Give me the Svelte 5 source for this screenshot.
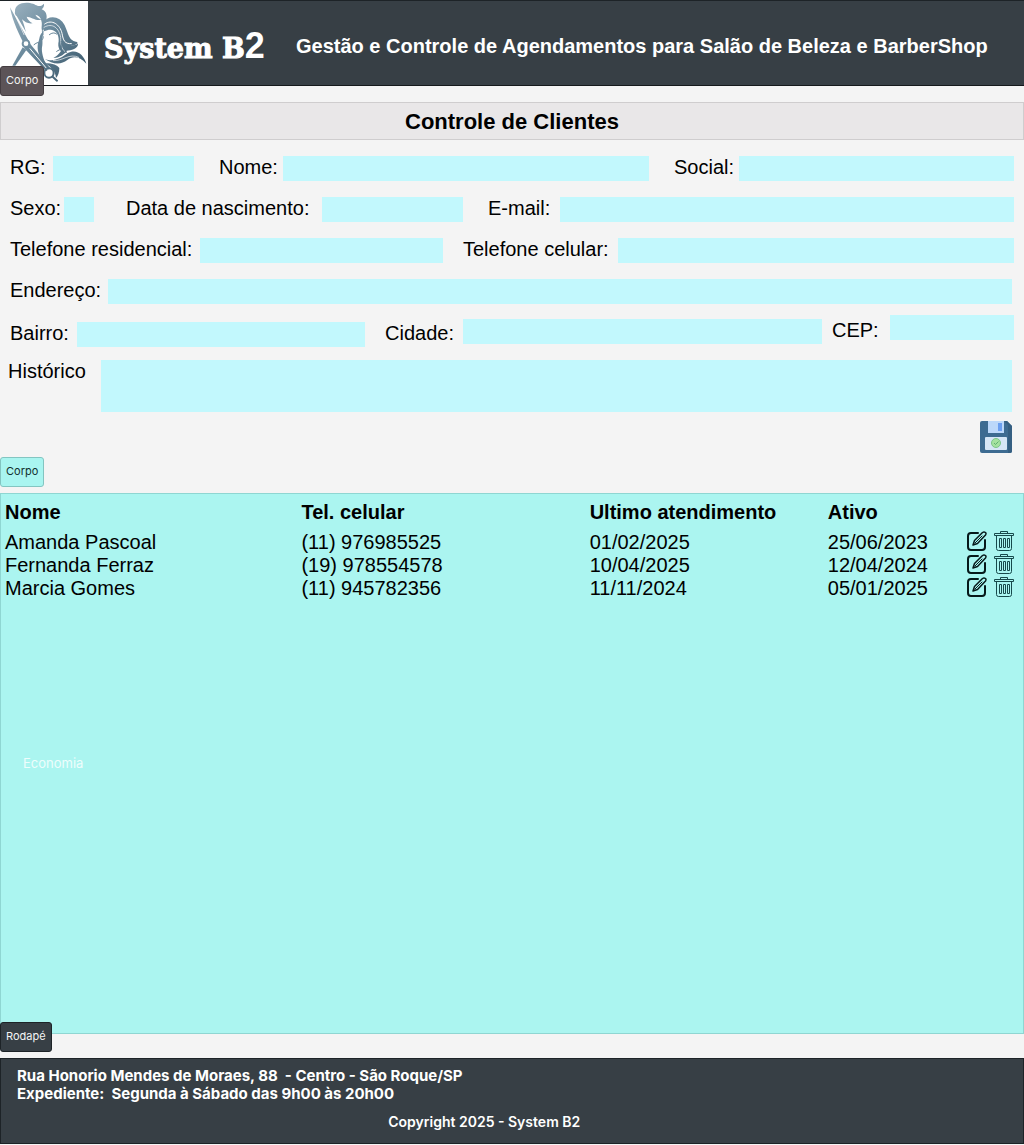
<script>
  const rows = [
    { name: 'Amanda Pascoal', phone: '(11) 976985525', last: '01/02/2025', active: '25/06/2023' },
    { name: 'Fernanda Ferraz', phone: '(19) 978554578', last: '10/04/2025', active: '12/04/2024' },
    { name: 'Marcia Gomes', phone: '(11) 945782356', last: '11/11/2024', active: '05/01/2025' }
  ];
</script>

<div class="page">
  <header class="top">
    <svg class="logo" viewBox="0 3 264 252" role="img" aria-label="Barbearia e salão">
      <defs>
        <linearGradient id="steel" gradientUnits="userSpaceOnUse" x1="40" y1="10" x2="230" y2="220">
          <stop offset="0" stop-color="#9ab1bf" />
          <stop offset="0.5" stop-color="#68879a" />
          <stop offset="1" stop-color="#3f5d70" />
        </linearGradient>
      </defs>
      <rect y="3" width="264" height="252" fill="#fff" />
      <g fill="url(#steel)">
        <path d="M45 34C44 14 66 5 90 9C106 12 112 20 120 18C126 17 130 13 132 11C133 18 130 24 125 28C142 34 143 54 136 68C134 78 132 88 127 92C122 84 128 74 124 62C122 52 116 46 106 44C112 54 120 58 127 58C112 66 92 50 80 50C82 58 90 66 98 70C84 72 74 66 66 58C72 72 74 84 78 96L50 48C44 46 44 40 45 34Z" />
        <path d="M30 22L88 126L76 140C58 104 38 66 30 22Z" />
        <path d="M86 126L150 204L138 214L72 144Z" />
        <path d="M68 142L79 150L46 197L37 197Z" />
        <path d="M128 68C144 44 180 46 194 76C206 102 206 122 228 125C238 126 230 136 214 137C198 142 196 150 202 158C178 160 172 142 176 124C178 98 160 80 132 94C128 84 128 76 128 68Z" />
        <path d="M192 140C208 132 224 142 234 130C236 147 212 152 200 152C194 162 182 172 160 174C178 164 184 150 192 140Z" />
        <path d="M134 176C160 188 184 174 202 160C228 144 252 164 259 191C238 168 218 168 202 180C182 196 156 192 134 176Z" />
        <path d="M136 190C158 190 172 196 178 204C178 218 174 228 168 234C166 214 156 204 136 190Z" />
        <path d="M114 130C110 150 116 172 138 192C130 178 124 156 126 142C130 126 124 112 132 92C116 104 120 116 114 130Z" />
      </g>
      <g fill="none" stroke="#fff" stroke-linecap="round" stroke-width="3">
        <path d="M134 72C156 56 180 74 186 100C190 122 194 132 214 131" />
        <path d="M132 82C158 66 178 86 182 112C182 132 184 146 194 154" stroke-width="2" />
        <path d="M160 182C188 184 208 158 236 172M42 38L72 104" stroke-width="2" />
        <path d="M90 146L142 208" stroke-width="3" />
      </g>
      <g fill="none" stroke="url(#steel)" stroke-linecap="round" stroke-width="3">
        <circle cx="78" cy="131" r="10" fill="#fff" stroke-width="6" />
        <circle cx="147" cy="219" r="14" stroke-width="6" />
        <path d="M158 230L171 242" stroke-width="6" />
        <path d="M127 92C126 98 132 102 128 106C132 112 128 118 124 122C120 128 110 126 102 134" />
        <path d="M148 104Q160 94 170 102M184 124C188 130 182 136 184 142C184 150 174 150 170 154" />
      </g>
    </svg>
    <span class="brand">System B<span class="two">2</span></span>
    <span class="tagline">Gestão e Controle de Agendamentos para Salão de Beleza e BarberShop</span>
    <span class="tag over">Corpo</span>
  </header>

  <h1>Controle de Clientes</h1>

  <form>
    <div class="row r1">
      <label for="rg">RG:</label><input id="rg" />
      <label class="next" for="nome">Nome:</label><input id="nome" />
      <label class="next" for="social">Social:</label><input id="social" />
    </div>
    <div class="row r2">
      <label for="sexo">Sexo:</label><input id="sexo" />
      <label class="next wide" for="nasc">Data de nascimento:</label><input id="nasc" />
      <label class="next" for="email">E-mail:</label><input id="email" type="email" />
    </div>
    <div class="row r3">
      <label for="res">Telefone residencial:</label><input id="res" type="tel" />
      <label class="next near" for="cel">Telefone celular:</label><input id="cel" type="tel" />
    </div>
    <div class="row r4">
      <label for="end">Endereço:</label><input id="end" />
    </div>
    <div class="row r5">
      <label class="low" for="bairro">Bairro:</label><input class="low" id="bairro" />
      <label class="next near low" for="cidade">Cidade:</label><input id="cidade" />
      <label class="next tight" for="cep">CEP:</label><input class="high" id="cep" />
    </div>
    <div class="row r6">
      <label for="hist">Histórico</label><textarea id="hist"></textarea>
    </div>
    <button class="save" type="button" aria-label="Salvar">
      <svg width="32" height="32" viewBox="0 0 32 32">
        <path d="M2 0H27L32 5V30Q32 32 30 32H2Q0 32 0 30V2Q0 0 2 0Z" fill="#3d6b91" />
        <path d="M27 0L32 5V30Q32 32 30 32H28V4L24 0Z" fill="#355f82" />
        <rect x="8" width="16" height="12" fill="#bcd8fa" />
        <rect x="18" y="2" width="4" height="8" fill="#6c9ff0" />
        <rect x="5" y="16" width="22" height="13" rx="1" fill="#d6e6f6" />
        <circle cx="16" cy="22" r="4.5" fill="#a5e2a0" stroke="#7cc58a" />
        <path d="M14 22L15.500 23.500L18.500 20.500" fill="none" stroke="#5fae72" />
      </svg>
    </button>
  </form>

  <span class="tag aqua">Corpo</span>

  <main>
    <table>
      <thead>
        <tr><th class="c1">Nome</th><th class="c2">Tel. celular</th><th class="c3">Ultimo atendimento</th><th class="c4">Ativo</th><th class="c5" aria-label="Ações"></th></tr>
      </thead>
      <tbody>
        {#each rows as r}
          <tr>
            <td>{r.name}</td><td>{r.phone}</td><td>{r.last}</td><td>{r.active}</td>
            <td>
              <div class="actions">
                <button type="button" aria-label="Editar {r.name}">
                  <svg width="20" height="20" viewBox="0 0 20 20" fill="none" stroke="#06191a" stroke-linejoin="round" stroke-linecap="round">
                    <path d="M11 2H4Q1 2 1 5V16Q1 19 4 19H15Q18 19 18 16V9" stroke-width="2" />
                    <path d="M6 14L7.500 9.500L15.500 1.500Q17 0.500 18.500 1.500Q19.500 2.500 18.500 4L10.500 12.500Z" stroke-width="1.500" />
                    <path d="M8 12L15 5" stroke-width="1" />
                  </svg>
                </button>
                <button type="button" aria-label="Excluir {r.name}">
                  <svg width="20" height="20" viewBox="0 0 20 20" fill="none" stroke="#17494b">
                    <path d="M0.500 2.500H19.500V4.500H0.500ZM6.500 2.500V0.500H13.500V2.500M2.500 4.500V17.500Q2.500 19.500 4.500 19.500H15.500Q17.500 19.500 17.500 17.500V4.500" />
                    <path d="M5.500 7.500H7.500V16.500H5.500ZM9.500 7.500H11.500V16.500H9.500ZM13.500 7.500H15.500V16.500H13.500Z" />
                  </svg>
                </button>
              </div>
            </td>
          </tr>
        {/each}
      </tbody>
    </table>
    <p class="ghost">Economia</p>
    <span class="tag foot">Rodapé</span>
  </main>

  <footer>
    <address>
      Rua Honorio Mendes de Moraes, 88&nbsp; - Centro - São Roque/SP<br />
      Expediente:&nbsp; Segunda à Sábado das 9h00 às 20h00
    </address>
    <p>Copyright 2025 - System B2</p>
  </footer>
</div>

<style>
  :global(body) { background: #f4f4f4; }
  * { box-sizing: border-box; }
  .page {
    min-height: 100vh;
    display: flex;
    flex-direction: column;
    padding-bottom: 1px;
    font-family: 'Liberation Sans', Arial, sans-serif;
    font-size: 20px;
    line-height: 23px;
    color: #000;
  }
  .top {
    position: relative;
    display: flex;
    align-items: center;
    height: 86px;
    background: #373f45;
    border-top: 1px solid #1d2327;
    border-bottom: 1px solid #15191c;
    color: #fff;
  }
  .logo { flex: none; width: 88px; height: 84px; }
  .brand {
    flex: none;
    width: 208px;
    padding: 8px 0 0 16px;
    font: bold 27px/40px 'DejaVu Serif', serif;
    white-space: nowrap;
    -webkit-text-stroke: 1px #fff;
  }
  .two { font: bold 36px/40px 'Liberation Sans', Arial, sans-serif; -webkit-text-stroke: 0; }
  .tagline { padding-top: 6px; font-weight: bold; white-space: nowrap; }
  .tag {
    display: flex;
    align-items: center;
    width: fit-content;
    height: 30px;
    padding: 0 5px 2px;
    border: 1px solid #443d41;
    border-radius: 3px;
    background: #5c5458;
    color: #f4f4f4;
    font: 11px/16px Inter, sans-serif;
  }
  .over { position: absolute; left: 0; top: 65px; }
  .aqua { margin: 4px 0 6px; background: #a9f5f0; border-color: #83c5c1; color: #12302f; }
  .foot { position: absolute; left: -1px; bottom: -19px; background: #373f45; border-color: #1d2327; }
  h1 {
    margin: 16px 0;
    padding: 7px 0 5px;
    border: 1px solid #cfcdce;
    background: #e9e7e8;
    text-align: center;
    font-size: 22px;
    line-height: 24px;
  }
  form { display: flex; flex-direction: column; gap: 16px; padding: 0 10px; }
  .row { display: grid; align-items: center; }
  .row label { padding-bottom: 2px; white-space: nowrap; }
  .row .next { padding-left: 25px; }
  .row .wide { padding-left: 32px; }
  .row .near { padding-left: 20px; }
  .row .tight { padding-left: 10px; }
  .low { align-self: end; }
  .high { align-self: start; }
  .r1 { grid-template-columns: 43px 141fr 89px 366fr 90px 275fr; }
  .r2 { grid-template-columns: 54px 30fr 228px 141fr 97px 454fr; }
  .r3 { grid-template-columns: 190px 243fr 175px 396fr; }
  .r4 { grid-template-columns: 98px 1fr; padding-right: 2px; }
  .r5 { grid-template-columns: 67px 288fr 98px 359fr 68px 124fr; min-height: 32px; margin: -5px 0 -3px; }
  .r6 { grid-template-columns: 93px 1fr; align-items: start; margin-left: -2px; padding-right: 2px; }
  input, textarea {
    display: block;
    width: 100%;
    min-width: 0;
    height: 25px;
    margin: 0;
    padding: 0 4px;
    border: 0;
    border-radius: 0;
    background: #c2f8fd;
    font: inherit;
    resize: none;
  }
  textarea { height: 52px; }
  button { display: block; margin: 0; padding: 0; border: 0; background: none; cursor: pointer; }
  button svg { display: block; }
  .save { align-self: flex-end; margin: -7px 2px 0 0; }
  main {
    position: relative;
    flex: 1;
    background: #abf5f0;
    border: 1px solid #8fd6d2;
  }
  table { width: 100%; table-layout: fixed; border-collapse: collapse; }
  th, td { padding: 0; text-align: left; vertical-align: top; white-space: nowrap; }
  th { height: 37px; padding-top: 7px; }
  th:first-child, td:first-child { padding-left: 4px; }
  .c1 { width: 29.400%; }
  .c2 { width: 28.200%; }
  .c3 { width: 23.300%; }
  .c4 { width: 13%; }
  .actions { display: flex; justify-content: flex-end; gap: 7px; padding-right: 9px; }
  .ghost { margin: 153px 22px 0; color: #eefdfc; font: 13px/20px Inter, sans-serif; }
  footer {
    margin-top: 24px;
    padding: 8px 16px;
    background: #373f45;
    border: 1px solid #1d2327;
    color: #fff;
    font: bold 15px/18px Inter, sans-serif;
  }
  address { font-style: normal; }
  footer p { margin: 10px 0 4px; padding-left: 37.500%; font-size: 14px; font-weight: 600; }
</style>
